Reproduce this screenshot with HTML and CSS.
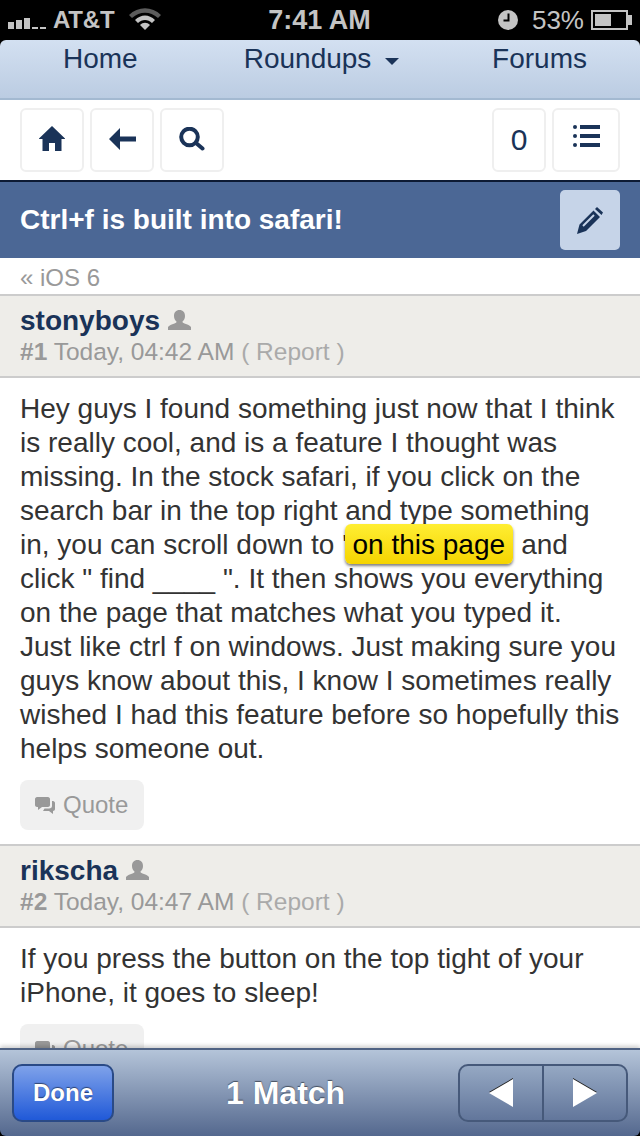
FILE: index.html
```html
<!DOCTYPE html>
<html lang="en">
<head>
    <meta charset="UTF-8">
    <meta name="viewport" content="width=device-width, initial-scale=1.0">
    <title>Ctrl+f is built into safari!</title>
    <link rel="stylesheet" href="styles.css">
</head>
<body>
<div class="screen">
    <div class="status-bar">
        <div class="status-left">
            <svg class="signal" width="38" height="11" viewBox="0 0 38 11"><path d="M0 4h6v7H0zM8 2h6v9H8zM16 0h6v11h-6zM24 9h6v2h-6zM32 9h6v2h-6z" fill="#c4c4c4"/></svg>
            <span class="carrier">AT&amp;T</span>
            <svg class="wifi" width="32" height="24" viewBox="0 0 32 24"><path d="M0 8C9-1 23-1 32 8l-3 3C21 4 11 4 3 11z" fill="#5c5c5c"/><path d="M6 13c6-6 14-6 20 0l-3 3c-4-4-10-4-14 0z" fill="#c4c4c4"/><path d="M11 18c3-3 7-3 10 0l-5 5z" fill="#c4c4c4"/></svg>
        </div>
        <div class="status-time">7:41 AM</div>
        <div class="status-right">
            <svg width="20" height="20" viewBox="0 0 20 20"><circle cx="10" cy="10" r="10" fill="#c4c4c4"/><path d="M9.500 3.500h2v8h-6v-2h4z" fill="#000"/></svg>
            <span class="battery-text">53%</span>
            <div class="battery"><div class="battery-fill"></div></div>
        </div>
    </div>

    <div class="nav">
        <a>Home</a>
        <a class="nav-mid">Roundups <span class="caret"></span></a>
        <a class="nav-last">Forums</a>
    </div>

    <div class="toolbar">
        <div class="tool-btn">
            <svg width="26" height="25" viewBox="0 0 26 25"><path d="M13 0L26 12.500V13H22.500V25H16V17H10V25H3.500V13H0V12.500Z" fill="#1a3358"/></svg>
        </div>
        <div class="tool-btn">
            <svg width="27" height="22" viewBox="0 0 27 22"><path d="M11 0V8.500H27V13.500H11V22L0 11Z" fill="#1a3358"/></svg>
        </div>
        <div class="tool-btn">
            <svg width="26" height="24" viewBox="0 0 26 24"><circle cx="10.500" cy="10" r="8.300" fill="none" stroke="#1a3358" stroke-width="4"/><path d="M17 16l6.500 5.500" stroke="#1a3358" stroke-width="4" stroke-linecap="round"/></svg>
        </div>
        <div class="tool-btn count">0</div>
        <div class="tool-btn list">
            <svg width="27" height="22" viewBox="0 0 27 22"><circle cx="2" cy="2" r="2" fill="#1a3358"/><circle cx="2" cy="11" r="2" fill="#1a3358"/><circle cx="2" cy="20" r="2" fill="#1a3358"/><path d="M7 0h20v4H7zM7 9h20v4H7zM7 18h20v4H7z" fill="#1a3358"/></svg>
        </div>
    </div>

    <div class="title-bar">
        <h1>Ctrl+f is built into safari!</h1>
        <div class="edit-btn">
            <svg width="26" height="27" viewBox="0 0 26 27"><path d="M0 27L2.500 17.500 16.500 3.500 23 10 9 24ZM18 2L20 0 26 5.500 24.500 8Z" fill="#1a3358"/><path d="M6 19L17 8" stroke="#c6d4e8" stroke-width="2"/></svg>
        </div>
    </div>

    <div class="content">
        <div class="breadcrumb">« iOS 6</div>

        <div class="post-head">
            <div class="author">stonyboys <svg class="user-icon" width="23" height="20" viewBox="0 0 23 20"><path d="M11.500 0c3.500 0 5.500 2.500 5.500 6 0 2.500-1 4.500-2.500 5.500 0 1 .5 1.500 2 2 3 1 5.500 2 6.500 3.500V20H0v-3c1-1.500 3.500-2.500 6.500-3.500 1.500-.5 2-1 2-2C7 10.500 6 8.500 6 6c0-3.500 2-6 5.500-6z" fill="#999"/></svg></div>
            <div class="meta"><b>#1</b> Today, 04:42 AM <span class="report">( Report )</span></div>
        </div>
        <div class="post-body">
            <p>Hey guys I found something just now that I think is really cool, and is a feature I thought was missing. In the stock safari, if you click on the search bar in the top right and type something in, you can scroll down to '<span class="match">on this page</span>' and click " find ____ ". It then shows you everything on the page that matches what you typed it. Just like ctrl f on windows. Just making sure you guys know about this, I know I sometimes really wished I had this feature before so hopefully this helps someone out.</p>
            <div class="quote-btn">
                <svg width="20" height="17" viewBox="0 0 20 17"><path d="M2 0h11c1 0 2 1 2 2v6c0 1-1 2-2 2H7l-4 3v-3H2c-1 0-2-1-2-2V2c0-1 1-2 2-2z" fill="#999"/><path d="M17 4h1c1 0 2 1 2 2v6c0 1-1 2-2 2v3l-4-3H8l1.500-2.500H14c2 0 3-1 3-2.500z" fill="#999"/></svg>
                Quote
            </div>
        </div>

        <div class="post-head">
            <div class="author">rikscha <svg class="user-icon" width="23" height="20" viewBox="0 0 23 20"><path d="M11.500 0c3.500 0 5.500 2.500 5.500 6 0 2.500-1 4.500-2.500 5.500 0 1 .5 1.500 2 2 3 1 5.500 2 6.500 3.500V20H0v-3c1-1.500 3.500-2.500 6.500-3.500 1.500-.5 2-1 2-2C7 10.500 6 8.500 6 6c0-3.500 2-6 5.500-6z" fill="#999"/></svg></div>
            <div class="meta"><b>#2</b> Today, 04:47 AM <span class="report">( Report )</span></div>
        </div>
        <div class="post-body">
            <p>If you press the button on the top tight of your iPhone, it goes to sleep!</p>
            <div class="quote-btn">
                <svg width="20" height="17" viewBox="0 0 20 17"><path d="M2 0h11c1 0 2 1 2 2v6c0 1-1 2-2 2H7l-4 3v-3H2c-1 0-2-1-2-2V2c0-1 1-2 2-2z" fill="#999"/><path d="M17 4h1c1 0 2 1 2 2v6c0 1-1 2-2 2v3l-4-3H8l1.500-2.500H14c2 0 3-1 3-2.500z" fill="#999"/></svg>
                Quote
            </div>
        </div>
    </div>

    <div class="find-bar">
        <div class="done-btn">Done</div>
        <div class="match-count">1 Match</div>
        <div class="pager">
            <div class="pager-btn"><span class="tri tri-left"></span></div>
            <div class="pager-btn"><span class="tri tri-right"></span></div>
        </div>
    </div>
</div>
</body>
</html>
```

FILE: styles.css
```css
* {
    box-sizing: border-box;
}

body {
    margin: 0;
    background-color: #000;
    font-family: "Liberation Sans", Arial, sans-serif;
}

.screen {
    width: 640px;
    height: 1136px;
    display: flex;
    flex-direction: column;
    overflow: hidden;
}

/* status bar */
.status-bar {
    height: 40px;
    flex: none;
    display: grid;
    grid-template-columns: 1fr auto 1fr;
    align-items: center;
    color: #c4c4c4;
    background-color: #000;
    padding: 0 9px 0 8px;
}

.status-left, .status-right {
    display: flex;
    align-items: center;
}

.status-right {
    justify-content: flex-end;
}

.signal {
    margin-top: 7px;
}

.carrier {
    font-size: 24px;
    font-weight: bold;
    margin-left: 7px;
    letter-spacing: -0.2px;
}

.wifi {
    margin-left: 15px;
    margin-top: -3px;
}

.status-time {
    font-size: 27px;
    font-weight: bold;
}

.battery-text {
    font-size: 26px;
    margin-left: 14px;
}

.battery {
    width: 37px;
    height: 20px;
    margin-left: 7px;
    margin-right: 3px;
    border: 2px solid #c4c4c4;
    padding: 2px;
    position: relative;
}

.battery::after {
    content: "";
    position: absolute;
    right: -6px;
    top: 3px;
    width: 4px;
    height: 10px;
    background-color: #c4c4c4;
}

.battery-fill {
    width: 16px;
    height: 100%;
    background-color: #c4c4c4;
}

/* nav */
.nav {
    height: 60px;
    flex: none;
    display: flex;
    padding: 0 53px 0 63px;
    font-size: 28px;
    line-height: 38px;
    white-space: nowrap;
    color: #1a3358;
    background: linear-gradient(#d3e0f1, #bbcce2);
    border-bottom: 2px solid #a3b9d1;
    border-radius: 6px 6px 0 0;
}

.nav-mid {
    margin-left: 106px;
}

.nav-last {
    margin-left: auto;
}

.caret {
    display: inline-block;
    width: 0;
    height: 0;
    margin-left: 6px;
    vertical-align: 3px;
    border-left: 7px solid transparent;
    border-right: 7px solid transparent;
    border-top: 7px solid #1a3358;
}

/* toolbar */
.toolbar {
    height: 82px;
    flex: none;
    display: flex;
    gap: 6px;
    padding: 8px 20px 0;
    background-color: #fff;
    border-bottom: 2px solid #0d1a33;
}

.tool-btn {
    width: 64px;
    height: 64px;
    display: flex;
    align-items: center;
    justify-content: center;
    padding-bottom: 3px;
    background-color: #fff;
    border: 2px solid #efefef;
    border-radius: 6px;
}

.count {
    width: 54px;
    margin-left: auto;
    padding-bottom: 0;
    font-size: 30px;
    color: #1a3358;
}

.list {
    width: 68px;
    padding-bottom: 8px;
}

/* thread title */
.title-bar {
    height: 76px;
    flex: none;
    display: flex;
    align-items: center;
    justify-content: space-between;
    padding: 0 20px;
    background-color: #4b6795;
}

.title-bar h1 {
    margin: 0;
    font-size: 28px;
    color: #fff;
}

.edit-btn {
    width: 60px;
    height: 60px;
    display: flex;
    align-items: center;
    justify-content: center;
    background-color: #c6d4e8;
    border-radius: 5px;
}

/* posts */
.content {
    flex: 1;
    min-height: 0;
    overflow: hidden;
    background-color: #fff;
}

.breadcrumb {
    height: 36px;
    padding-left: 20px;
    font-size: 24px;
    line-height: 40px;
    color: #999;
}

.post-head {
    height: 84px;
    padding: 9px 20px 0;
    background-color: #eeede9;
    border-top: 2px solid #ccc;
    border-bottom: 2px solid #ccc;
}

.author {
    font-size: 28px;
    font-weight: bold;
    line-height: 32px;
    color: #1a3358;
}

.meta {
    font-size: 24.5px;
    line-height: 30px;
    color: #999;
}

.report {
    color: #aaa;
}

.post-body {
    padding: 14px 20px 14px;
}

.post-body p {
    margin: 0 0 14px;
    font-size: 28px;
    line-height: 34px;
    color: #333;
}

.match {
    position: relative;
    z-index: 0;
    margin: 0 3px 0 5px;
    color: #000;
}

.match::before {
    content: "";
    position: absolute;
    z-index: -1;
    top: -5px;
    bottom: -4px;
    left: -8px;
    right: -8px;
    background: linear-gradient(#ffee33, #f5d400);
    border-radius: 6px;
    box-shadow: 0 2px 3px rgba(0, 0, 0, 0.5);
}

.quote-btn {
    width: 124px;
    height: 50px;
    display: flex;
    align-items: center;
    gap: 8px;
    padding-left: 15px;
    font-size: 24px;
    color: #999;
    background-color: #f0f0f0;
    border-radius: 8px;
}

/* find on page bar */
.find-bar {
    height: 88px;
    flex: none;
    display: flex;
    align-items: center;
    padding: 0 12px;
    background: linear-gradient(#b4c4d9, #54688e);
    border-top: 2px solid #4f6283;
    border-radius: 0 0 6px 6px;
    box-shadow: 0 -2px 4px rgba(0, 0, 0, 0.2);
}

.done-btn {
    width: 102px;
    height: 58px;
    display: flex;
    align-items: center;
    justify-content: center;
    font-size: 24px;
    font-weight: bold;
    color: #fff;
    text-shadow: 0 -1px 1px rgba(0, 0, 0, 0.5);
    background: linear-gradient(#7fa2ea, #2059d8);
    border: 2px solid #2a4a86;
    border-radius: 10px;
}

.match-count {
    margin-left: 112px;
    font-size: 32px;
    font-weight: bold;
    color: #fff;
    text-shadow: 0 -1px 1px rgba(0, 0, 0, 0.5);
}

.pager {
    width: 170px;
    height: 58px;
    margin-left: auto;
    display: flex;
    background: linear-gradient(#95a8c3, #62769b);
    border: 2px solid #46597a;
    border-radius: 10px;
}

.pager-btn {
    flex: 1;
    display: flex;
    align-items: center;
    justify-content: center;
}

.pager-btn + .pager-btn {
    border-left: 2px solid #46597a;
}

.tri {
    width: 0;
    height: 0;
    border-top: 14px solid transparent;
    border-bottom: 14px solid transparent;
    filter: drop-shadow(0 -1px 0 #222);
}

.tri-left {
    border-right: 24px solid #fff;
}

.tri-right {
    border-left: 24px solid #fff;
}
```
